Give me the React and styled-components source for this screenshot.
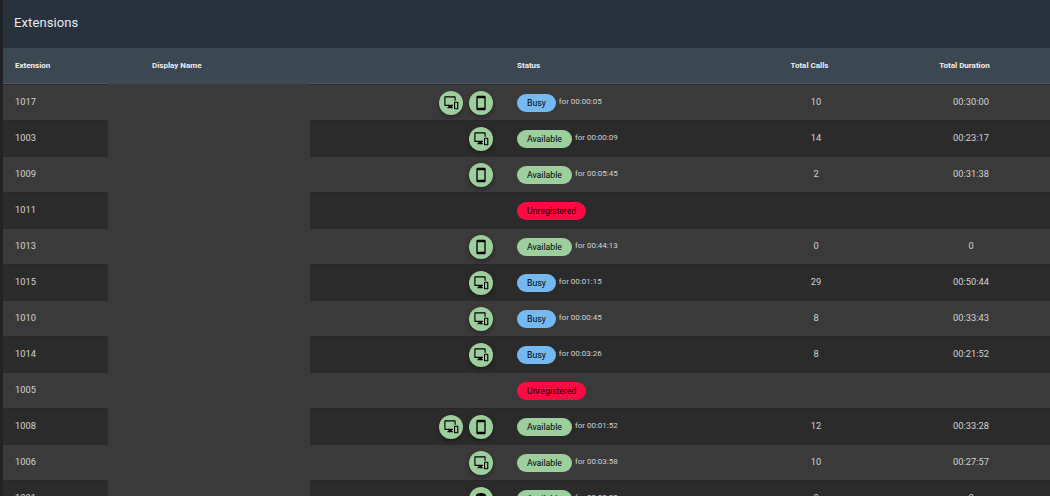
import React from "react";
import styled, { createGlobalStyle } from "styled-components";

const Global = createGlobalStyle`
  html, body { margin: 0; padding: 0; height: 100%; overflow: hidden; background: #1f2124; }
  #root { height: 100%; }
`;

const Page = styled.div`
  height: 496px;
  padding-left: 3px;
  overflow: hidden;
  font-family: Roboto, "Liberation Sans", sans-serif;
  color: #e4e4e4;
`;

const TitleBar = styled.div`
  height: 48px;
  padding: 0 11px 3px;
  display: flex;
  align-items: center;
  box-sizing: border-box;
  background: #28323d;
  font-size: 13px;
  letter-spacing: 0.1px;
  color: #e8ebed;
`;

const Row = styled.div`
  display: grid;
  grid-template-columns: 105px 202px 195px 235px 152px 1fr;
  height: 36px;
  background: ${(p) => (p.$odd ? "#3a3a3a" : "#2b2b2b")};
`;

const HeaderRow = styled(Row)`
  background: #3b4852;
  font-size: 8px;
  font-weight: 700;
  color: #eef0f1;
`;

const HeaderCell = styled.div`
  display: flex;
  align-items: center;
  justify-content: ${(p) => (p.$center ? "center" : "flex-start")};
  padding: ${(p) => (p.$center ? "0 13px 1px 0" : `0 0 1px ${p.$indent || 12}px`)};
  border-bottom: 1px solid #4e5b66;
  box-sizing: border-box;
  white-space: nowrap;
`;

const Cell = styled.div`
  display: flex;
  align-items: center;
  justify-content: ${(p) => p.$align || "flex-start"};
  padding: 0 12px ${(p) => (p.$text ? "3px" : "0")};
  box-sizing: border-box;
  font-size: 9.3px;
  color: #d2d2d2;
  border-top: 1px solid ${(p) => (p.$odd ? "#2b2b2b" : "#272727")};
`;

const NameCell = styled.div`
  background: #3a3a3a;
`;

const HeaderNameCell = styled(HeaderCell)`
  border-bottom-color: #3b4852;
`;

const IconButton = styled.span`
  width: 24px;
  height: 24px;
  margin-left: 6px;
  border-radius: 50%;
  background: #9ccf9c;
  display: inline-flex;
  align-items: center;
  justify-content: center;
  box-shadow: 0 2px 4px rgba(0, 0, 0, 0.35);
`;

const StatusChip = styled.span`
  height: 18px;
  display: inline-flex;
  align-items: center;
  padding: 0 10px;
  border-radius: 9px;
  font-size: 8.7px;
  color: #000;
  background: ${(p) => p.$bg};
`;

const Since = styled.span`
  margin: 0 0 2px 3px;
  font-size: 8px;
  color: #d2d2d2;
`;

const DeskIcon = () => (
  <svg width="16" height="16" viewBox="0 0 24 24">
    <path
      fill="#000"
      fillRule="evenodd"
      d="M3.500 2h14c.9 0 1.500.6 1.500 1.500v11.500c0 .9-.6 1.500-1.500 1.500h-4v2h1.500v1.500H6.500V18.500h1.500v-2H3.500c-.9 0-1.500-.6-1.500-1.500V3.500C2 2.600 2.600 2 3.500 2zM3.700 3.700v11.100h13.600V3.700H3.700z"
    />
    <rect x="15" y="8.500" width="9" height="14" rx="1.500" fill="#9ccf9c" />
    <path
      fill="#000"
      fillRule="evenodd"
      d="M17.500 10h4.500c.6 0 1 .4 1 1v9.500c0 .6-.4 1-1 1h-4.500c-.6 0-1-.4-1-1V11c0-.6.4-1 1-1zM18.200 11.800v7.900h3.100v-7.900h-3.100z"
    />
  </svg>
);

const PhoneIcon = () => (
  <svg width="16" height="16" viewBox="0 0 24 24" fill="#000">
    <path d="M17 1.010 7 1c-1.100 0-2 .9-2 2v18c0 1.100.9 2 2 2h10c1.100 0 2-.9 2-2V3c0-1.100-.9-1.990-2-1.990zM17 19H7V5h10v14z" />
  </svg>
);

const DeskPhoneIcon = () => (
  <svg width="16" height="16" viewBox="0 0 24 24" fill="#000">
    <path
      fillRule="evenodd"
      d="M4 8c0-3 3-5 8-5s8 2 8 5v2h-3.500V8h-9v2H4V8zm3 3h10l3 9c0 .6-.4 1-1 1H5c-.6 0-1-.4-1-1l3-9zm5 2a3 3 0 1 0 0 6 3 3 0 0 0 0-6z"
    />
  </svg>
);

const icons = { d: DeskIcon, p: PhoneIcon, t: DeskPhoneIcon };

const ChipColors = { Busy: "#74b9ef", Available: "#9ccf9c", Unregistered: "#ff0a43" };

const rows = [
  ["1017", ["d", "p"], "Busy", "for 00:00:05", "10", "00:30:00"],
  ["1003", ["d"], "Available", "for 00:00:09", "14", "00:23:17"],
  ["1009", ["p"], "Available", "for 00:05:45", "2", "00:31:38"],
  ["1011", [], "Unregistered", "", "", ""],
  ["1013", ["p"], "Available", "for 00:44:13", "0", "0"],
  ["1015", ["d"], "Busy", "for 00:01:15", "29", "00:50:44"],
  ["1010", ["d"], "Busy", "for 00:00:45", "8", "00:33:43"],
  ["1014", ["d"], "Busy", "for 00:03:26", "8", "00:21:52"],
  ["1005", [], "Unregistered", "", "", ""],
  ["1008", ["d", "p"], "Available", "for 00:01:52", "12", "00:33:28"],
  ["1006", ["d"], "Available", "for 00:03:58", "10", "00:27:57"],
  ["1001", ["t"], "Available", "for 00:00:00", "0", "0"],
];

export default function App() {
  return (
    <Page>
      <Global />
      <TitleBar>Extensions</TitleBar>
      <HeaderRow>
        <HeaderCell>Extension</HeaderCell>
        <HeaderNameCell $indent={44}>Display Name</HeaderNameCell>
        <HeaderCell />
        <HeaderCell>Status</HeaderCell>
        <HeaderCell $center>Total Calls</HeaderCell>
        <HeaderCell $center>Total Duration</HeaderCell>
      </HeaderRow>
      {rows.map(([ext, devices, status, since, calls, duration], i) => {
        const odd = i % 2 === 0;
        return (
          <Row key={ext} $odd={odd}>
            <Cell $odd={odd} $text>{ext}</Cell>
            <NameCell />
            <Cell $odd={odd} $align="flex-end">
              {devices.map((d) => {
                const Icon = icons[d];
                return (
                  <IconButton key={d}>
                    <Icon />
                  </IconButton>
                );
              })}
            </Cell>
            <Cell $odd={odd}>
              <StatusChip $bg={ChipColors[status]}>{status}</StatusChip>
              {since && <Since>{since}</Since>}
            </Cell>
            <Cell $odd={odd} $text $align="center">{calls}</Cell>
            <Cell $odd={odd} $text $align="center">{duration}</Cell>
          </Row>
        );
      })}
    </Page>
  );
}
